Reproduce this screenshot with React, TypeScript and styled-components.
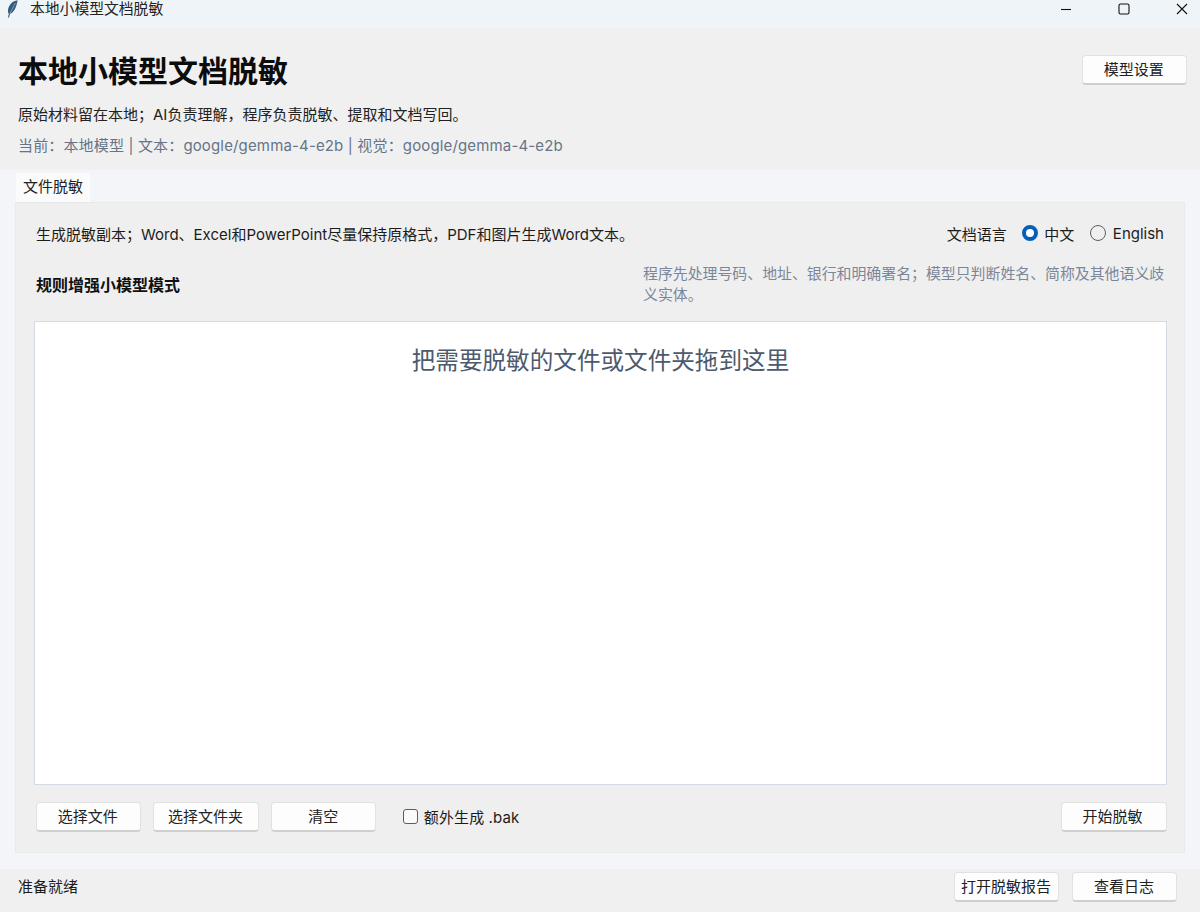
import React from 'react';
import styled, { createGlobalStyle } from 'styled-components';

const GlobalStyle = createGlobalStyle`
  html, body {
    margin: 0;
    padding: 0;
    background: #f3f5f9;
  }
  * {
    box-sizing: border-box;
  }
`;

const Window = styled.div`
  width: 1200px;
  height: 912px;
  display: flex;
  flex-direction: column;
  overflow: hidden;
  background: #f3f5f9;
  color: #1c1c1c;
  font-family: 'Inter', 'Noto Sans CJK SC', sans-serif;
  font-size: 15px;
`;

const TitleBar = styled.div`
  height: 28px;
  flex: none;
  display: flex;
  align-items: flex-start;
  background: #eef4f8;
`;

const TitleIcon = styled.svg`
  width: 12px;
  height: 18px;
  margin: 0 0 0 6px;
`;

const TitleText = styled.span`
  margin-left: 12px;
  line-height: 18px;
  font-size: 14.8px;
  color: #222;
`;

const WindowControls = styled.div`
  margin-left: auto;
  display: flex;
  align-items: center;
  height: 18px;
  padding-right: 12px;
  gap: 46px;
`;

const ControlIcon = styled.svg`
  width: 12px;
  height: 12px;
  stroke: #111;
  fill: none;
  stroke-width: 1.1;
`;

const Header = styled.header`
  height: 142px;
  flex: none;
  display: flex;
  justify-content: space-between;
  align-items: flex-start;
  padding: 26px 13px 0 18px;
  background: #f0f0f0;
`;

const HeaderText = styled.div`
  display: flex;
  flex-direction: column;
`;

const Title = styled.h1`
  margin: 0;
  font-size: 30px;
  line-height: 34px;
  font-weight: 700;
  color: #0c0c0c;
`;

const Subtitle = styled.div`
  margin-top: 17px;
  line-height: 20px;
  color: #222;
`;

const ModelInfo = styled.div`
  margin-top: 11px;
  line-height: 20px;
  letter-spacing: 0.15px;
  color: #667488;
`;

const Button = styled.button<{ $width?: number }>`
  width: ${p => p.$width ?? 105.4}px;
  height: 30px;
  flex: none;
  padding: 1px 1px 0 0;
  border: 1px solid #e1e1e1;
  border-bottom: 2px solid #cfcfcf;
  border-radius: 4px;
  background: #fdfdfd;
  color: #222;
  font-family: inherit;
  font-size: 15px;
  line-height: 26px;
`;

const SettingsButton = styled(Button)`
  margin-top: 1px;
`;

const Content = styled.main`
  flex: 1;
  display: flex;
  flex-direction: column;
  padding: 3px 15px 16px 15px;
`;

const TabStrip = styled.div`
  height: 29px;
  flex: none;
  display: flex;
  padding-left: 1px;
`;

const Tab = styled.div`
  width: 74px;
  background: #fbfbfb;
  text-align: center;
  line-height: 28px;
  color: #222;
`;

const Panel = styled.section`
  flex: 1;
  display: flex;
  flex-direction: column;
  padding: 0 17px 0 18px;
  border: 1px solid #e8e9ea;
  background: #efefef;
`;

const InfoRow = styled.div`
  height: 62px;
  flex: none;
  display: flex;
  align-items: center;
  justify-content: space-between;
  padding: 0 3px 2px 2px;
`;

const LanguagePicker = styled.div`
  display: flex;
  align-items: center;
`;

const LanguageLabel = styled.span`
  margin-right: 15px;
`;

const RadioDot = styled.span<{ $checked?: boolean }>`
  width: 16px;
  height: 16px;
  margin-right: 6.5px;
  border-radius: 50%;
  background: ${p => (p.$checked ? '#fff' : 'transparent')};
  border: ${p => (p.$checked ? '4.5px solid #0660b8' : '1px solid #5d5d5d')};
`;

const RadioLabel = styled.span<{ $gap?: number }>`
  margin-right: ${p => p.$gap ?? 0}px;
`;

const ModeRow = styled.div`
  height: 56px;
  flex: none;
  display: flex;
  align-items: flex-start;
  justify-content: space-between;
  padding-left: 2px;
`;

const ModeTitle = styled.strong`
  margin-top: 9px;
  font-size: 16px;
  font-weight: 700;
  line-height: 22px;
  color: #111;
`;

const ModeHint = styled.div`
  width: 524px;
  margin-top: -1px;
  line-height: 21px;
  font-size: 14.9px;
  color: #7a8699;
`;

const DropZone = styled.div`
  flex: 1;
  padding-top: 22px;
  border: 1px solid #d5dbe3;
  background: #fff;
  text-align: center;
  font-size: 23.6px;
  line-height: 34px;
  color: #4c5a6d;
`;

const Toolbar = styled.div`
  height: 67px;
  flex: none;
  display: flex;
  align-items: center;
  gap: 12.4px;
  padding: 0 0 4px 1.5px;
`;

const CheckLabel = styled.label`
  display: flex;
  align-items: center;
  margin-left: 14px;
  letter-spacing: 0.1px;
`;

const CheckBox = styled.span`
  width: 15px;
  height: 15px;
  margin-right: 6px;
  border: 1px solid #5d5d5d;
  border-radius: 3px;
  background: #fafafa;
`;

const StartButton = styled(Button)`
  margin-left: auto;
  padding-right: 3px;
`;

const StatusBar = styled.footer`
  height: 43px;
  flex: none;
  display: flex;
  align-items: flex-start;
  justify-content: space-between;
  padding: 3px 23px 0 18px;
  background: #f0f0f0;
`;

const StatusText = styled.span`
  line-height: 30px;
`;

const StatusActions = styled.div`
  display: flex;
  gap: 13px;
`;

const App: React.FC = () => {
  return (
    <Window>
      <GlobalStyle />
      <TitleBar>
        <TitleIcon viewBox="0 0 12 18">
          <path d="M11.6 0.2 C6.5 0.8 2.6 5 2 10 C1.8 12 2.2 13.2 2.8 13.8 L2 17.4 L3 17.4 L4 14 C7.8 12.6 10.6 7 11.6 0.2 Z" fill="#35597f" />
          <path d="M9.4 3 L3.6 14" stroke="#b9c9d8" strokeWidth="0.6" fill="none" />
        </TitleIcon>
        <TitleText>本地小模型文档脱敏</TitleText>
        <WindowControls>
          <ControlIcon viewBox="0 0 12 12">
            <path d="M1 6.5 H11" />
          </ControlIcon>
          <ControlIcon viewBox="0 0 12 12">
            <rect x="1" y="1" width="10" height="10" rx="1.5" />
          </ControlIcon>
          <ControlIcon viewBox="0 0 12 12">
            <path d="M1 1 L11 11 M11 1 L1 11" />
          </ControlIcon>
        </WindowControls>
      </TitleBar>
      <Header>
        <HeaderText>
          <Title>本地小模型文档脱敏</Title>
          <Subtitle>原始材料留在本地；AI负责理解，程序负责脱敏、提取和文档写回。</Subtitle>
          <ModelInfo>当前：本地模型 | 文本：google/gemma-4-e2b | 视觉：google/gemma-4-e2b</ModelInfo>
        </HeaderText>
        <SettingsButton>模型设置</SettingsButton>
      </Header>
      <Content>
        <TabStrip>
          <Tab>文件脱敏</Tab>
        </TabStrip>
        <Panel>
          <InfoRow>
            <span>生成脱敏副本；Word、Excel和PowerPoint尽量保持原格式，PDF和图片生成Word文本。</span>
            <LanguagePicker>
              <LanguageLabel>文档语言</LanguageLabel>
              <RadioDot $checked />
              <RadioLabel $gap={16}>中文</RadioLabel>
              <RadioDot />
              <RadioLabel>English</RadioLabel>
            </LanguagePicker>
          </InfoRow>
          <ModeRow>
            <ModeTitle>规则增强小模型模式</ModeTitle>
            <ModeHint>程序先处理号码、地址、银行和明确署名；模型只判断姓名、简称及其他语义歧义实体。</ModeHint>
          </ModeRow>
          <DropZone>把需要脱敏的文件或文件夹拖到这里</DropZone>
          <Toolbar>
            <Button>选择文件</Button>
            <Button>选择文件夹</Button>
            <Button>清空</Button>
            <CheckLabel>
              <CheckBox />
              额外生成 .bak
            </CheckLabel>
            <StartButton $width={106}>开始脱敏</StartButton>
          </Toolbar>
        </Panel>
      </Content>
      <StatusBar>
        <StatusText>准备就绪</StatusText>
        <StatusActions>
          <Button $width={105}>打开脱敏报告</Button>
          <Button $width={105}>查看日志</Button>
        </StatusActions>
      </StatusBar>
    </Window>
  );
};

export default App;
